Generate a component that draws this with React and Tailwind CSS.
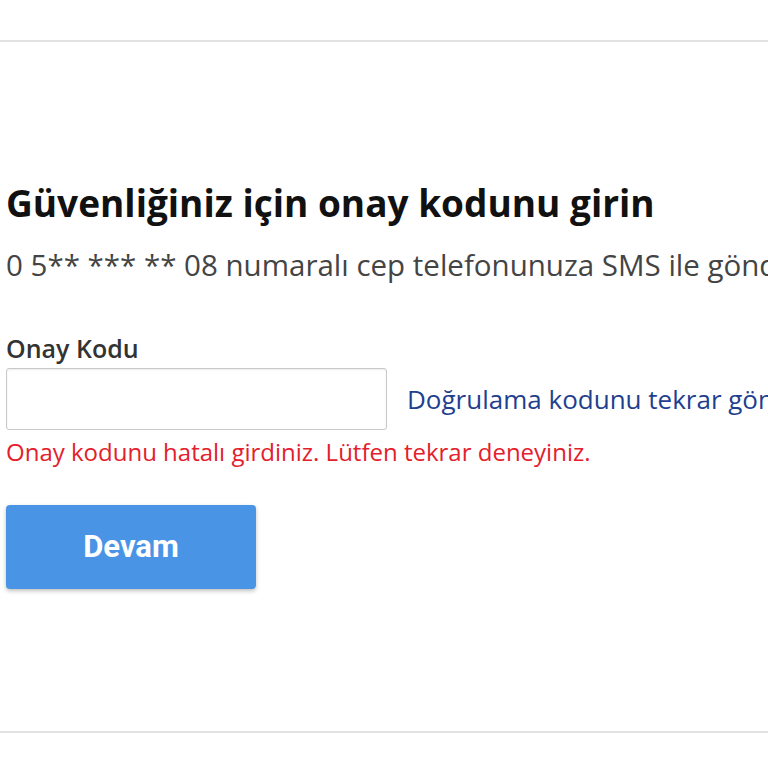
export default function App() {
  return (
    <div className="w-[768px] h-[768px] bg-white overflow-hidden relative" style={{ fontFamily: '"Open Sans", "Noto Sans", sans-serif' }}>
      <div className="h-[40px]" />
      <div className="h-[2px] bg-[#e2e2e2]" />
      <div className="h-[689px] pl-[6px] pt-[139px] whitespace-nowrap overflow-hidden">
        <h1 className="text-[37px] leading-[44px] font-bold text-[#111]">Güvenliğiniz için onay kodunu girin</h1>
        <p className="mt-[22px] text-[29.5px] leading-[36px] text-[#444]">0 5** *** ** 08 numaralı cep telefonunuza SMS ile gönderilen onay kodunu girin</p>
        <div className="mt-[50px] text-[25px] leading-[30px] font-semibold text-[#333]">Onay Kodu</div>
        <div className="mt-[5px] flex items-center gap-[20px]">
          <div className="shrink-0 w-[381px] h-[62px] border border-[#c8c8c8] rounded-[3px] shadow-[inset_0_1px_2px_rgba(0,0,0,0.08)]" />
          <span className="text-[26px] text-[#1f3f8f]">Doğrulama kodunu tekrar gönder</span>
        </div>
        <div className="mt-[7px] text-[24px] leading-[30px] text-[#e3202b]">Onay kodunu hatalı girdiniz. Lütfen tekrar deneyiniz.</div>
        <button className="mt-[38px] w-[250px] h-[84px] bg-[#4a94e6] rounded-[4px] shadow-[0_2px_4px_rgba(0,0,0,0.25)] text-white text-[31px] font-bold" style={{ fontFamily: 'Roboto, "Open Sans", sans-serif' }}>Devam</button>
      </div>
      <div className="h-[2px] bg-[#e2e2e2]" />
    </div>
  );
}
